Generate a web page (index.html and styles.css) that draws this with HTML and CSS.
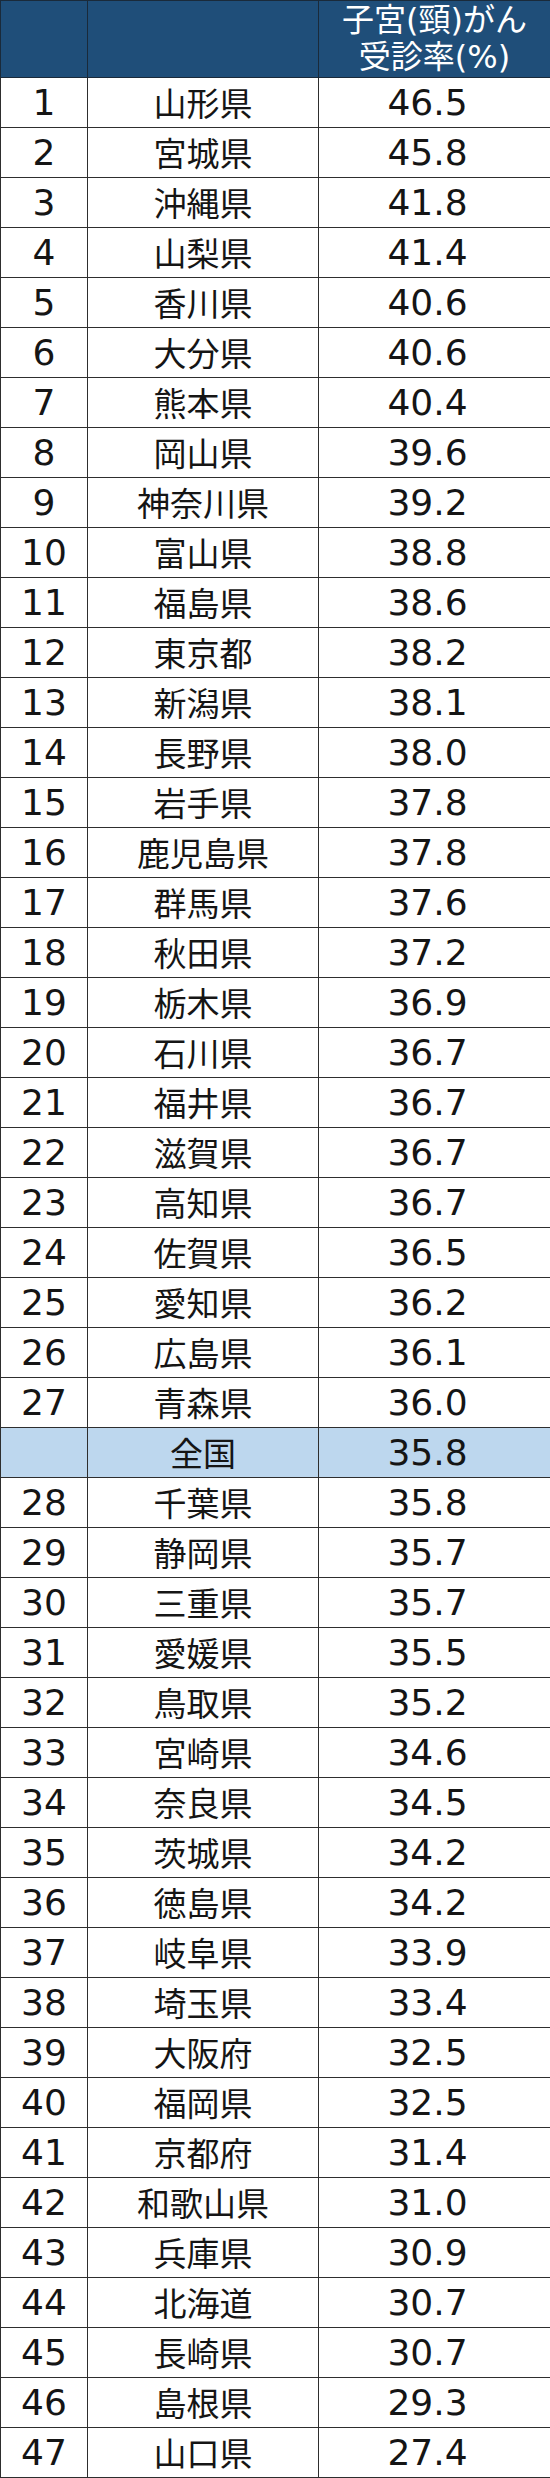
FILE: index.html
```html
<!DOCTYPE html>
<html lang="ja">
<head>
<meta charset="utf-8">
<link rel="stylesheet" href="styles.css">
</head>
<body>
<table class="rank-table">
<thead>
<tr class="head-row"><th class="c-rank"></th><th class="c-name"></th><th class="c-val"><span class="hline">子宮(頸)がん</span><span class="hline">受診率(%)</span></th></tr>
</thead>
<tbody>
<tr><td>1</td><td class="name">山形県</td><td class="val">46.5</td></tr>
<tr><td>2</td><td class="name">宮城県</td><td class="val">45.8</td></tr>
<tr><td>3</td><td class="name">沖縄県</td><td class="val">41.8</td></tr>
<tr><td>4</td><td class="name">山梨県</td><td class="val">41.4</td></tr>
<tr><td>5</td><td class="name">香川県</td><td class="val">40.6</td></tr>
<tr><td>6</td><td class="name">大分県</td><td class="val">40.6</td></tr>
<tr><td>7</td><td class="name">熊本県</td><td class="val">40.4</td></tr>
<tr><td>8</td><td class="name">岡山県</td><td class="val">39.6</td></tr>
<tr><td>9</td><td class="name">神奈川県</td><td class="val">39.2</td></tr>
<tr><td>10</td><td class="name">富山県</td><td class="val">38.8</td></tr>
<tr><td>11</td><td class="name">福島県</td><td class="val">38.6</td></tr>
<tr><td>12</td><td class="name">東京都</td><td class="val">38.2</td></tr>
<tr><td>13</td><td class="name">新潟県</td><td class="val">38.1</td></tr>
<tr><td>14</td><td class="name">長野県</td><td class="val">38.0</td></tr>
<tr><td>15</td><td class="name">岩手県</td><td class="val">37.8</td></tr>
<tr><td>16</td><td class="name">鹿児島県</td><td class="val">37.8</td></tr>
<tr><td>17</td><td class="name">群馬県</td><td class="val">37.6</td></tr>
<tr><td>18</td><td class="name">秋田県</td><td class="val">37.2</td></tr>
<tr><td>19</td><td class="name">栃木県</td><td class="val">36.9</td></tr>
<tr><td>20</td><td class="name">石川県</td><td class="val">36.7</td></tr>
<tr><td>21</td><td class="name">福井県</td><td class="val">36.7</td></tr>
<tr><td>22</td><td class="name">滋賀県</td><td class="val">36.7</td></tr>
<tr><td>23</td><td class="name">高知県</td><td class="val">36.7</td></tr>
<tr><td>24</td><td class="name">佐賀県</td><td class="val">36.5</td></tr>
<tr><td>25</td><td class="name">愛知県</td><td class="val">36.2</td></tr>
<tr><td>26</td><td class="name">広島県</td><td class="val">36.1</td></tr>
<tr><td>27</td><td class="name">青森県</td><td class="val">36.0</td></tr>
<tr class="national"><td></td><td class="name">全国</td><td class="val">35.8</td></tr>
<tr><td>28</td><td class="name">千葉県</td><td class="val">35.8</td></tr>
<tr><td>29</td><td class="name">静岡県</td><td class="val">35.7</td></tr>
<tr><td>30</td><td class="name">三重県</td><td class="val">35.7</td></tr>
<tr><td>31</td><td class="name">愛媛県</td><td class="val">35.5</td></tr>
<tr><td>32</td><td class="name">鳥取県</td><td class="val">35.2</td></tr>
<tr><td>33</td><td class="name">宮崎県</td><td class="val">34.6</td></tr>
<tr><td>34</td><td class="name">奈良県</td><td class="val">34.5</td></tr>
<tr><td>35</td><td class="name">茨城県</td><td class="val">34.2</td></tr>
<tr><td>36</td><td class="name">徳島県</td><td class="val">34.2</td></tr>
<tr><td>37</td><td class="name">岐阜県</td><td class="val">33.9</td></tr>
<tr><td>38</td><td class="name">埼玉県</td><td class="val">33.4</td></tr>
<tr><td>39</td><td class="name">大阪府</td><td class="val">32.5</td></tr>
<tr><td>40</td><td class="name">福岡県</td><td class="val">32.5</td></tr>
<tr><td>41</td><td class="name">京都府</td><td class="val">31.4</td></tr>
<tr><td>42</td><td class="name">和歌山県</td><td class="val">31.0</td></tr>
<tr><td>43</td><td class="name">兵庫県</td><td class="val">30.9</td></tr>
<tr><td>44</td><td class="name">北海道</td><td class="val">30.7</td></tr>
<tr><td>45</td><td class="name">長崎県</td><td class="val">30.7</td></tr>
<tr><td>46</td><td class="name">島根県</td><td class="val">29.3</td></tr>
<tr><td>47</td><td class="name">山口県</td><td class="val">27.4</td></tr>
</tbody>
</table>
</body>
</html>
```
FILE: styles.css
```css
html, body {
  margin: 0;
  padding: 0;
  background: #ffffff;
}
.rank-table {
  border-collapse: collapse;
  width: 550px;
  table-layout: fixed;
  font-family: "DejaVu Sans", "Noto Sans CJK JP", sans-serif;
  color: #151515;
}
.rank-table th,
.rank-table td {
  border: 1px solid #2e2e2e;
  padding: 0;
  text-align: center;
  vertical-align: middle;
  font-weight: normal;
  font-size: 36px;
  line-height: 1;
  height: 50px;
  box-sizing: border-box;
}
.rank-table td.name {
  font-family: "Noto Sans CJK JP", sans-serif;
  font-size: 33px;
}
.rank-table td.val {
  padding-right: 14px;
}
.c-rank { width: 87px; }
.c-name { width: 231px; }
.c-val { width: 232px; }
.head-row th {
  background: #1f4e79;
  color: #ffffff;
  height: 77px;
  font-size: 32px;
  border-color: #1a2a3a;
}
.hline {
  display: block;
  line-height: 37px;
  height: 37px;
  overflow: visible;
}
.national td {
  background: #bdd7ee;
}
```
